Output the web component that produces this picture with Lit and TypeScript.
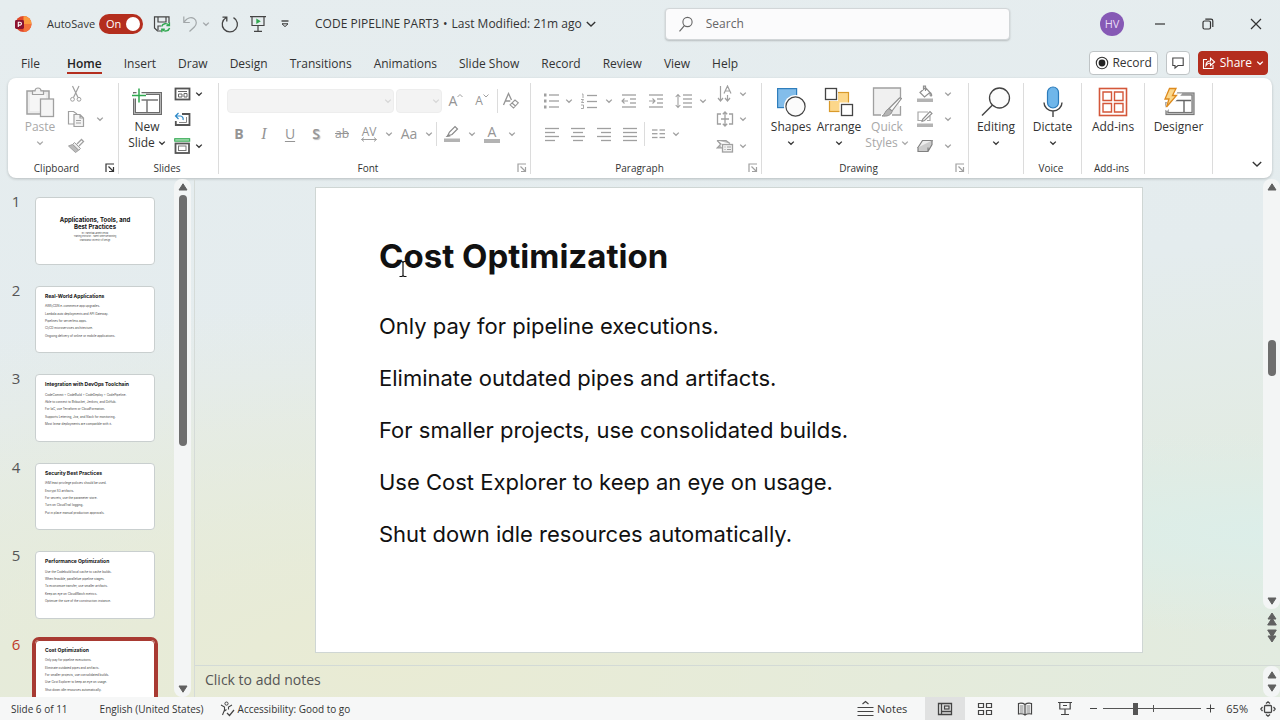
import { LitElement, html, css, svg } from "lit";
import { customElement } from "lit/decorators.js";
import { classMap } from "lit/directives/class-map.js";

const K = "#444";
const G = "#a0a0a0";

const icon = (w: number, h: number, body: unknown) => html`<svg width=${w} height=${h} viewBox="0 0 ${w} ${h}" fill="none" aria-hidden="true">${body}</svg>`;

const chev = (color = "#333", w = 8) => html`<svg width=${w} height=${w} viewBox="0 0 8 8" fill="none" aria-hidden="true"><path d="M1.2 2.6 L4 5.3 L6.8 2.6" stroke=${color} stroke-width=${w > 8 ? 0.9 : 1.3}/></svg>`;

const lines = (rows: number[][], color = G) => rows.map(([x1, x2, y]) => svg`<path d="M${x1} ${y}H${x2}" stroke=${color} stroke-width="1.3"/>`);

const I = {
  logo: icon(18, 18, svg`<circle cx="9.5" cy="9" r="8" fill="#e0492a"/><path d="M9.5 1a8 8 0 0 1 8 8h-8z" fill="#fb9a3e"/><path d="M17.5 9a8 8 0 0 1-8 8V9z" fill="#f4713a"/><rect x="1" y="5" width="9" height="9" rx="1.4" fill="#8c1230"/><path d="M4.300 12V7.200h1.700a1.400 1.400 0 0 1 0 2.900H4.300" stroke="#fff" stroke-width="1.100"/>`),
  save: icon(18, 18, svg`<path d="M8 16H4.5L1.5 13V1.8H16V8M5 2v5h8V2M5 15v-4h3" stroke="#444" stroke-width="1.2"/><path d="M8.6 11.4a4.2 4.2 0 0 1 7.2-1.2M16.4 7.6v3h-3M16.6 13a4.2 4.2 0 0 1-7.2 1.6M8.8 17.2v-3h3" stroke="#2fa84f" stroke-width="1.4"/>`),
  undo: icon(17, 18, svg`<path d="M1.8 1.5v6h6M2 7.2C5 3 9 1.6 12 3.6c3.200 2.200 2.800 6 .3 8.400L7.500 16.500" stroke="#a2a7a9" stroke-width="1.2"/>`),
  redo: icon(18, 18, svg`<path d="M5 2.700A7.600 7.600 0 1 0 12.500 2.600M5.800 6.500V2.200H1.500" stroke="#444" stroke-width="1.300"/>`),
  present: icon(16, 18, svg`<path d="M0 1.600h16M2 2v8.500h12V2M8 10.500V16M4 16.300h8" stroke="#444" stroke-width="1.200"/><path d="M6.300 3.600l4.500 2.700-4.500 2.700z" fill="#2fa84f"/>`),
  qat: icon(10, 10, svg`<path d="M1.500 2h7" stroke="#333" stroke-width="1.300"/><path d="M2 4.800L5 7.600 8 4.800z" stroke="#333"/>`),
  search: icon(16, 17, svg`<circle cx="9.500" cy="6" r="4.600" stroke="#666" stroke-width="1.100"/><path d="M6.400 9.600L1.500 15.300" stroke="#666" stroke-width="1.200"/>`),
  min: icon(12, 12, svg`<path d="M1 6h10" stroke="#333" stroke-width="1.200"/>`),
  restore: icon(12, 12, svg`<rect x="1" y="3" width="7.500" height="8" rx="1.500" stroke="#333" stroke-width="1.200"/><path d="M3.300 1.200H9a1.800 1.800 0 0 1 1.800 1.800v6" stroke="#333" stroke-width="1.200"/>`),
  close: icon(12, 12, svg`<path d="M1 1l10 10M11 1L1 11" stroke="#333" stroke-width="1.200"/>`),
  rec: icon(14, 14, svg`<circle cx="7" cy="7" r="5.700" stroke="#333" stroke-width="1.100"/><circle cx="7" cy="7" r="3.400" fill="#222"/>`),
  comment: icon(14, 14, svg`<path d="M1.800 2h10.400v7.500H7L4 12V9.500H1.800z" stroke="#444" stroke-width="1.100"/>`),
  share: icon(14, 14, svg`<path d="M5 3.500H1.500v9h9.500V9M4 9.500C4 6.500 6 5 8.500 5V2.200L12.600 6 8.500 9.500V7C6.500 7 5 7.800 4 9.500z" stroke="#fff" stroke-width="1.100"/>`),
  paste: icon(30, 32, svg`<rect x="2" y="5" width="22" height="23" fill="#ececec" stroke=${G} stroke-width="1.500"/><rect x="5" y="8" width="16" height="17" fill="#f6f6f6"/><path d="M7.500 8.500V5H10c0-4 6-4 6 0h2.500v3.500z" fill="#f3f3f3" stroke=${G} stroke-width="1.200"/><rect x="15.500" y="13" width="13" height="17.500" fill="#f5f5f5" stroke=${G} stroke-width="1.300"/>`),
  cut: icon(16, 18, svg`<path d="M4.500 1l5.500 11.500M11 1L5.500 12.500" stroke=${G} stroke-width="1.200"/><circle cx="4.500" cy="14.300" r="1.900" stroke=${G}/><circle cx="11" cy="14.300" r="1.900" stroke=${G}/>`),
  copy: icon(18, 18, svg`<path d="M7 14H1.500V1.500h5L10 4" stroke=${G} stroke-width="1.200"/><path d="M7 4.500h6l3.500 3.500v8.500H7zM13 4.500V8h3.500M9 10.500h5M9 13h5" fill="#f4f4f4" stroke=${G} stroke-width="1.200"/>`),
  brush: icon(18, 16, svg`<path d="M10 6l4.500-4.500 2 2L12 8" stroke=${G} stroke-width="1.300"/><path d="M7.500 4.500l6 6-1.800 1.800-6-6z" fill="#eee" stroke=${G}/><path d="M5.500 6.500L1.500 8l7 6.500 3-2.200z" fill="#bbb" stroke=${G}/>`),
  newSlide: icon(32, 28, svg`<rect x="3.500" y="5.500" width="26" height="20" fill="#fff" stroke="#6c6c6c" stroke-width="3"/><rect x="3.500" y="5.500" width="26" height="20" stroke="#b5b5b5"/><path d="M6 12h21M16 12v12" stroke="#777" stroke-width="1.500"/><path d="M0 8h15M8 0v15" stroke="#fff" stroke-width="5"/><path d="M1 7.500h14M8 .5v14" stroke="#2fa84f" stroke-width="1.500"/>`),
  layout: icon(17, 14, svg`<rect x="1.500" y="1.500" width="14" height="11" stroke="#555" stroke-width="1.800"/><path d="M4 4.500h9M4.500 7h3.500v3H4.500zM10 6.500h3V10h-3z" stroke="#666"/>`),
  reset: icon(17, 15, svg`<path d="M8 2h7.500v11H1.800V9" stroke="#555" stroke-width="1.800"/><path d="M12.500 5v5.500H5" stroke="#888"/><path d="M4.500 1L1.500 4l3 3M2 4h4.500a3 3 0 0 1 2.500 4" stroke="#2b88c8" stroke-width="1.200"/>`),
  section: icon(17, 16, svg`<rect x=".7" y=".7" width="15" height="2.500" fill="#a8dcb3" stroke="#2fa84f"/><rect x="1.500" y="5.500" width="13.500" height="9.500" stroke="#555" stroke-width="1.800"/><rect x="4.500" y="8" width="7.500" height="4.500" stroke="#777"/>`),
  launcher: (c: string) => icon(10, 10, svg`<path d="M1 9V1h8M3.500 3.500l4.500 4.500M8.500 4v4.500H4" stroke=${c} stroke-width="1.200"/>`),
  av: icon(18, 16, svg`<path d="M1.500 13.500h15M4 11.500l-2.500 2L4 15.500M14 11.500l2.500 2-2.500 2" stroke=${G}/>`),
  pen: icon(18, 18, svg`<path d="M4.500 11l2-4L12 1.500l2.500 2.500L9 9.500z" stroke="#8a8a8a" stroke-width="1.200"/><path d="M2.500 12l3.500-3 1.500 2.500z" fill="#8a8a8a"/><rect x="1" y="13.500" width="16" height="3.500" fill="#b3b3b3"/>`),
  clear: icon(18, 18, svg`<path d="M1.500 13L6.500 1.500 9.500 8M3.300 9h5" stroke="#959595" stroke-width="1.300"/><path d="M8 12.800L13 8l3.300 2.800-4.800 5.200zM10 11l3.500 3" fill="#fff" stroke="#959595" stroke-width="1.100"/>`),
  bullets: icon(18, 16, svg`<path d="M2 2h2.500M2 8h2.500M2 14h2.500" stroke=${G} stroke-width="3"/>${lines([[7, 17, 2], [7, 17, 8], [7, 17, 14]])}`),
  numbers: icon(18, 17, svg`<path d="M2 1h1v4M1 6.500h2.500l-2 3H4M1 12h2.500v3.500H1" stroke=${G} stroke-width=".9"/>${lines([[7, 17, 2.5], [7, 17, 8.5], [7, 17, 14.5]])}`),
  outdent: icon(16, 16, svg`${lines([[1, 15, 2], [9, 15, 6], [9, 15, 10], [1, 15, 14]])}<path d="M1 8h6M3.500 5.500L1 8l2.500 2.500" stroke=${G} stroke-width="1.100"/>`),
  indent: icon(16, 16, svg`${lines([[1, 15, 2], [9, 15, 6], [9, 15, 10], [1, 15, 14]])}<path d="M1 8h6M4.500 5.500L7 8l-2.500 2.500" stroke=${G} stroke-width="1.100"/>`),
  spacing: icon(17, 16, svg`${lines([[8, 17, 2], [8, 17, 6], [8, 17, 10], [8, 17, 14]])}<path d="M3 1.500v13M.7 4L3 1.500 5.300 4M.7 12L3 14.500 5.300 12" stroke=${G} stroke-width="1.100"/>`),
  left: icon(16, 15, lines([[1, 15, 1.5], [1, 11, 5.5], [1, 15, 9.5], [1, 11, 13.5]])),
  center: icon(16, 15, lines([[1, 15, 1.5], [3, 13, 5.5], [1, 15, 9.5], [3, 13, 13.5]])),
  right: icon(16, 15, lines([[1, 15, 1.5], [5, 15, 5.5], [1, 15, 9.5], [5, 15, 13.5]])),
  justify: icon(16, 15, lines([[1, 15, 1.5], [1, 15, 5.5], [1, 15, 9.5], [1, 15, 13.5]])),
  cols: icon(13, 10, lines([[0, 5.5, 1], [7.5, 13, 1], [0, 5.5, 4.7], [7.5, 13, 4.7], [0, 5.5, 8.500], [7.5, 13, 8.500]])),
  textDir: icon(17, 18, svg`<path d="M3.500 1v15M1 13l2.500 3L6 13M10.500 10v6M8 13l2.500 3 2.500-3M7 8.500L10.500 1 14 8.500M8.200 6h4.600" stroke=${G} stroke-width="1.200"/>`),
  alignText: icon(18, 16, svg`<path d="M5 3H1.500v10H5M13 3h3.500v10H13M5 8h8M9 1v14M6.800 3.200L9 1l2.200 2.200M6.800 12.800L9 15l2.200-2.200" stroke=${G} stroke-width="1.300"/>`),
  smart: icon(18, 14, svg`<path d="M1 1.500h9l4 3M1 1.500l4 3.500-4 4h5" fill="#bbb" stroke=${G} stroke-width="1.200"/><rect x="6.500" y="5.500" width="10" height="7.500" fill="#f2f2f2" stroke=${G} stroke-width="1.300"/><path d="M8.500 8h1M11 8h4M8.500 10.500h1M11 10.500h4" stroke=${G}/>`),
  shapes: icon(30, 30, svg`<rect x="1.600" y="1.600" width="19" height="19" fill="#83bdea" stroke="#2f7ebc" stroke-width="1.200"/><circle cx="19.500" cy="19.500" r="11.500" fill="#fff"/><circle cx="19.500" cy="19.500" r="9.600" fill="#fbfbfb" stroke="#444" stroke-width="1.200"/>`),
  arrange: icon(30, 30, svg`<rect x="5.500" y="5.500" width="19" height="19" fill="#fcd78a" stroke="#d99a2b" stroke-width="1.200"/><rect x="-1" y="-1" width="15" height="15" fill="#fff"/><rect x="1.500" y="1.500" width="11" height="11" fill="#fff" stroke="#444" stroke-width="1.300"/><rect x="15.500" y="15.500" width="15" height="15" fill="#fff"/><rect x="17.500" y="17.500" width="11" height="11" fill="#fff" stroke="#444" stroke-width="1.300"/>`),
  quick: icon(30, 32, svg`<path d="M9 29H1.500V2h27v10M28.500 20v9H20" fill="#f0f0f0" stroke=${G} stroke-width="1.300"/><rect x="3" y="3" width="24" height="25" fill="#f0f0f0"/><path d="M29.500 12.500L20 25l-3-2.500L27.500 12z" fill="#fafafa" stroke="#909090" stroke-width="1.200"/><path d="M17 22.500l3 3c-1 4-5 5-10 4.500 3-1 3-6 7-7.500z" fill="#b5b5b5" stroke="#909090"/>`),
  fill: icon(18, 18, svg`<path d="M4 7.500L9.500 2.500l4.500 5-5.500 4.500zM7.500 5V1.200h2V6M14.500 7.500c1.500 2 1.500 3.500.5 3.500s-1.200-1-.5-3.500" stroke="#909090" stroke-width="1.200"/><rect x="1" y="13.500" width="16" height="3.500" fill="#b3b3b3"/>`),
  outline: icon(18, 18, svg`<path d="M12 2H2v8.500h4M14 6v4.500h-3" stroke="#a8a8a8" stroke-width="1.200"/><path d="M6.500 9.500L14 1.500l2 2-7.500 7-2.500.8z" fill="#fff" stroke="#909090" stroke-width="1.100"/><rect x="1" y="13.500" width="16" height="3.500" fill="#b3b3b3"/>`),
  effects: icon(18, 14, svg`<path d="M2 8.500L6.500 1.500h9.500L12 8.500z" fill="#eee" stroke="#808080" stroke-width="1.200"/><path d="M2 8.500v4h10l4-7v-4M12 8.500v4" fill="#ccc" stroke="#808080" stroke-width="1.200"/>`),
  editing: icon(30, 30, svg`<circle cx="18.500" cy="11" r="10" fill="#fcfcfc" stroke="#444" stroke-width="1.300"/><path d="M11.500 18L1 28.500" stroke="#444" stroke-width="1.400"/>`),
  mic: icon(20, 32, svg`<rect x="4.500" y="1" width="11" height="21" rx="5.500" fill="#6fb6ea" stroke="#2b7bbb" stroke-width="1.200"/><path d="M1 16.500a9 8.500 0 0 0 18 0M10 25v6" stroke="#444" stroke-width="1.400"/>`),
  addins: icon(30, 30, svg`<rect x="1.500" y="1.500" width="27" height="27" stroke="#d4573a" stroke-width="1.600"/><path d="M5 5h8.500v8.500H5zM16.500 5H25v8.500h-8.500zM5 16.500h8.500V25H5zM16.500 16.500H25V25h-8.500z" stroke="#d4573a" stroke-width="1.400"/>`),
  designer: icon(32, 30, svg`<rect x="4" y="7" width="26" height="19.500" fill="#fff" stroke="#777" stroke-width="3.200"/><rect x="4" y="7" width="26" height="19.500" stroke="#bbb"/><path d="M7 13.500h21M21 13.500V25" stroke="#666" stroke-width="1.400"/><path d="M6 .5h9L11 8h5L3 23l3-9.500H1z" fill="#fff" stroke="#fff" stroke-width="3"/><path d="M6.500 1.500H13L9.500 8.500h4L3.500 20l2.500-8H2z" fill="#fcd78a" stroke="#dd8a1e" stroke-width="1.300"/>`),
  up: icon(10, 8, svg`<path d="M5 .8L9 7H1z" fill="#606060" stroke="#606060" stroke-linejoin="round"/>`),
  down: icon(10, 8, svg`<path d="M5 7.200L9 1H1z" fill="#606060" stroke="#606060" stroke-linejoin="round"/>`),
  up2: icon(10, 14, svg`<path d="M5 1L9 7H1zM5 6L9.300 13H.7z" fill="#606060" stroke="#606060" stroke-linejoin="round"/>`),
  down2: icon(10, 14, svg`<path d="M5 8L9.300 1H.7zM5 13L9 7H1z" fill="#606060" stroke="#606060" stroke-linejoin="round"/>`),
  access: icon(15, 16, svg`<circle cx="6.500" cy="2.600" r="1.600" stroke=${K}/><path d="M1 4l3.500 2v3L2.500 14M12 4L8.500 6v2.500M4.500 10l2-1.500" stroke=${K} stroke-width="1.100"/><path d="M7 12l2.500 2.500L14 9" stroke=${K} stroke-width="1.200"/>`),
  notes: icon(17, 17, svg`<path d="M5.500 4L8.500 1.500 11.500 4M.5 7.500h16M.5 11.500h16M.5 15.500h16" stroke=${K} stroke-width="1.200"/>`),
  normal: icon(16, 14, svg`<path d="M1.500 1.500h13v11h-13zM4.500 1.500v11M4.500 9.500h10" stroke=${K} stroke-width="1.300"/><rect x="7.500" y="4" width="4.500" height="3" stroke=${K} stroke-width="1.200"/>`),
  sorter: icon(16, 14, svg`<path d="M1.500 1.500h5v4h-5zM9.500 1.500h5v4h-5zM1.500 8.500h5v4h-5zM9.500 8.500h5v4h-5z" stroke=${K} stroke-width="1.200"/>`),
  reading: icon(16, 14, svg`<path d="M8 2.500C6 1 3.500 1 1.500 1.500v10.500C4 11.500 6 11.500 8 13c2-1.500 4-1.500 6.500-1V1.500C12.500 1 10 1 8 2.500zM8 2.500V13" stroke=${K} stroke-width="1.200"/><path d="M3 4h3.500M3 6h3.500M3 8h3.500M3 10h3.500M9.500 4H13M9.500 6H13M9.500 8H13M9.500 10H13" stroke="#777" stroke-width=".9"/>`),
  show: icon(14, 15, svg`<path d="M0 1.500h14M1.800 2v6h10.400V2M7 8v5.500M3 13.500h8M5 4.500h4" stroke=${K} stroke-width="1.200"/>`),
  fit: icon(16, 16, svg`<rect x="4.500" y="4.500" width="7" height="7" rx="1" stroke=${K} stroke-width="1.300"/><path d="M6 2.500L8 .8l2 1.700M6 13.500l2 1.700 2-1.700M2.500 6L.8 8l1.700 2M13.500 6l1.700 2-1.700 2" stroke=${K} stroke-width="1.200"/>`),
  beam: icon(8, 18, svg`<path d="M.5 1.500h2.500l1 1 1-1h2.500M4 2.500v13M.5 16.500h2.500l1-1 1 1h2.500" stroke="#111" stroke-width="1.200"/>`),
};

interface Slide { title: string; lines: string[]; cover?: boolean; }

const slides: Slide[] = [
  { title: "Applications, Tools, and Best Practices", cover: true, lines: ["BY: Harshitaa Jasmin Kelura", "Training Instructor - Talent Shine Networking", "Chandubha University of Design"] },
  { title: "Real-World Applications", lines: ["AWS/CDN e-commerce app upgrades.", "Lambda auto deployments and API Gateway.", "Pipelines for serverless apps.", "CI/CD microservices architecture.", "Ongoing delivery of online or mobile applications."] },
  { title: "Integration with DevOps Toolchain", lines: ["CodeCommit + CodeBuild + CodeDeploy + CodePipeline.", "Able to connect to Bitbucket, Jenkins, and GitHub.", "For IaC, use Terraform or CloudFormation.", "Supports Lettering, Jira, and Slack for monitoring.", "Most linear deployments are compatible with it."] },
  { title: "Security Best Practices", lines: ["IAM least privilege policies should be used.", "Encrypt S3 artifacts.", "For secrets, use the parameter store.", "Turn on CloudTrail logging.", "Put in place manual production approvals."] },
  { title: "Performance Optimization", lines: ["Use the Codebuild local cache to cache builds.", "When feasible, parallelize pipeline stages.", "To economize transfer, use smaller artifacts.", "Keep an eye on CloudWatch metrics.", "Optimize the size of the construction instance."] },
  { title: "Cost Optimization", lines: ["Only pay for pipeline executions.", "Eliminate outdated pipes and artifacts.", "For smaller projects, use consolidated builds.", "Use Cost Explorer to keep an eye on usage.", "Shut down idle resources automatically."] },
];

const tabs = ["File", "Home", "Insert", "Draw", "Design", "Transitions", "Animations", "Slide Show", "Record", "Review", "View", "Help"];

@customElement("app-root")
export class AppRoot extends LitElement {
  static styles = css`
    :host {
      display: flex; flex-direction: column; height: 100vh; overflow: hidden;
      font-family: "Open Sans", "Noto Sans", sans-serif; font-size: 12px; line-height: 16px; color: #333;
      background:
        radial-gradient(ellipse 40% 14% at 100% 74%, #dceee9, transparent),
        radial-gradient(ellipse 70% 50% at 30% 92%, #e9ebd4, transparent),
        linear-gradient(172deg, #e6edef 0%, #e4ecee 46%, #e2ebe2 72%, #e2ebdf 100%);
    }
    * { box-sizing: border-box; }
    svg { display: block; flex: none; }
    button, input, select, textarea { font: inherit; color: inherit; border: 0; background: none; padding: 0; margin: 0; }
    button { display: flex; align-items: center; justify-content: center; white-space: nowrap; }
    .grow { flex: 1; }

    .titlebar { display: flex; align-items: center; height: 48px; padding: 0 18px 0 14px; flex: none; }
    .autosave { display: flex; align-items: center; gap: 4px; margin-left: 15px; font-size: 11px; }
    .switch { display: flex; align-items: center; justify-content: space-between; width: 44px; height: 20px; border-radius: 10px; background: #b42e1e; color: #fff; padding: 0 3px 0 7px; position: relative; }
    .switch input { position: absolute; inset: 0; width: 100%; height: 100%; opacity: 0; }
    .knob { width: 14px; height: 14px; border-radius: 50%; background: #fff; }
    .qat { display: flex; align-items: center; gap: 11px; margin-left: 10px; }
    .qat button { min-width: 16px; }
    .qat .tight { gap: 3px; }
    .doc { margin-left: 22px; gap: 3px; }
    .dot { margin: 0 1px; }
    .search { display: flex; align-items: center; gap: 12px; flex: 0 1 345px; height: 32px; margin-left: 68px; padding: 0 12px; border: 1px solid #d2d6d8; border-radius: 4px; background: #fbfbfc; box-shadow: 0 1px 2px #0003; }
    .search input { flex: 1; min-width: 0; outline: none; }
    .search input::placeholder { color: #666; opacity: 1; }
    .avatar { width: 24px; height: 24px; border-radius: 50%; background: #8659b5; color: #e9dcf5; font-size: 11px; }
    .window { display: flex; gap: 36px; margin-left: 30px; }

    .tabs { display: flex; align-items: center; height: 30px; padding: 0 12px 0 21px; flex: none; }
    .tabs nav { display: flex; gap: 22px; margin-top: 4px; }
    .tabs nav button { height: 18px; border-bottom: 2px solid transparent; }
    .tabs nav .file { margin-right: 5px; }
    .tabs nav .on { font-weight: 600; border-color: #b42e1e; color: #222; }
    .actions { display: flex; gap: 8px; }
    .actions button { height: 24px; border: 1px solid #bfc4c6; border-radius: 4px; background: #fff; padding: 0 5px; gap: 3px; }
    .actions .share { background: #b42e1e; border-color: #b42e1e; color: #fff; padding: 0 3px; gap: 4px; }
    .actions .note { padding: 0 4px; }

    .ribbon { display: flex; height: 100px; margin: 0 8px; padding: 5px 0 4px; flex: none; background: #fff; border-radius: 8px; box-shadow: 0 1px 3px #0003; }
    .group { display: flex; flex-direction: column; border-right: 1px solid #dcdcdc; flex: none; }
    .body { display: flex; flex: 1 1 0; min-height: 0; }
    .foot { display: flex; align-items: center; height: 12px; font-size: 10px; line-height: 12px; padding-right: 3px; flex: none; }
    .foot span { flex: 1; text-align: center; }
    .clip { width: 111px; }
    .clip .body { padding-left: 8px; }
    .slides { width: 100px; }
    .slides .body { padding-left: 4px; }
    .font { width: 312px; }
    .para { width: 231px; }
    .draw { width: 207px; }
    .draw .body { padding-left: 5px; }
    .edit { width: 55px; }
    .voice { width: 58px; }
    .add { width: 63px; }
    .design { width: 68px; }
    .big { flex-direction: column; justify-content: flex-start; padding-top: 1px; width: 48px; }
    .big .line { display: flex; align-items: center; gap: 3px; height: 16px; flex: none; }
    .big .pic { display: flex; align-items: center; justify-content: center; height: 35px; flex: none; }
    .off { color: #a8a8a8; }
    .full { width: 100%; }
    .stack { display: grid; grid-template-rows: 22px 28px 26px; grid-auto-flow: column; align-content: start; }
    .s-clip { grid-template-columns: 24px 24px; }
    .s-slides { grid-template-columns: 22px 12px; }
    .s-text { grid-template-columns: 24px 12px; margin-left: 4px; }
    .s-draw { grid-template-columns: 24px 22px; margin-left: 2px; }
    .rows { display: flex; flex-direction: column; gap: 9px; padding: 6px 0 0 8px; color: #959595; }
    .row { display: flex; align-items: center; height: 24px; }
    .c12 { width: 12px; }
    .c24 { width: 24px; }
    .c26 { width: 26px; }
    .c28 { width: 28px; }
    .combo { appearance: none; height: 24px; border: 1px solid #e6e6e6; border-radius: 4px; background: #efefef; }
    .face { width: 167px; }
    .size { width: 46px; }
    .field { display: grid; align-items: center; margin-right: 2px; }
    .field > * { grid-area: 1 / 1; }
    .field svg { justify-self: end; margin-right: 2px; }
    .sep { width: 1px; height: 24px; background: #dcdcdc; margin: 0 1px; }
    .glyph { font-size: 14px; line-height: 16px; }
    .small { font-size: 12px; }
    .b { font-weight: 700; }
    .i { font-family: "Liberation Serif", serif; font-style: italic; font-size: 16px; }
    .u { text-decoration: underline; text-underline-offset: 2px; }
    .s { text-decoration: line-through; }
    .shadow { font-weight: 600; text-shadow: 1px 1px 1px #bbb; }
    .over { display: grid; justify-items: center; align-items: center; }
    .over > * { grid-area: 1 / 1; }
    .over .top { align-self: start; line-height: 12px; }
    .bar { border-bottom: 4px solid #b3b3b3; line-height: 14px; width: 16px; text-align: center; }
    .sup { align-self: flex-start; }
    .collapse { align-self: flex-end; margin: 0 9px 4px 0; }

    .main { display: flex; flex: 1; min-height: 0; padding-top: 1px; }
    .panel { width: 174px; overflow: hidden; padding: 18px 0 0 11px; display: flex; flex-direction: column; gap: 21px; }
    .item { display: flex; gap: 14px; width: 100%; align-items: flex-start; justify-content: flex-start; flex: none; }
    .num { width: 10px; font-size: 15px; line-height: 20px; margin-top: -6px; color: #555; }
    .thumb { width: 120px; aspect-ratio: 16 / 9; border: 1px solid #c9cfcf; border-radius: 4px; background: #fff; padding: 6px 9px; text-align: left; font-family: Inter, sans-serif; color: #111; display: flex; flex-direction: column; white-space: nowrap; }
    .thumb b { font-size: 5px; line-height: 7px; }
    .thumb ul { list-style: none; margin: 3px 0 0; padding: 0; display: grid; grid-auto-rows: 1fr; height: 37px; align-items: center; font-size: 3px; line-height: 4px; color: #444; }
    .thumb.cover { white-space: normal; text-align: center; padding: 18px 20px; }
    .thumb.cover b { font-size: 6px; }
    .thumb.cover ul { height: 10px; margin-top: 2px; font-size: 2px; line-height: 3px; }
    .current .num { color: #c0392b; }
    .current .thumb { outline: 3px solid #a83a32; outline-offset: 0; border-color: #a83a32; }

    .scroll { display: flex; flex-direction: column; align-items: center; width: 17px; background: #f3f5f5; border-radius: 8px; padding: 4px 0; gap: 4px; flex: none; }
    .thumbbar { width: 8px; height: 251px; border-radius: 4px; background: #6e6e6e; }
    .work { display: flex; flex-direction: column; flex: 1; min-width: 0; margin-left: 3px; border-left: 1px solid #d5dbd8; }
    .stage { display: flex; flex: 1; min-height: 0; }
    .canvas { flex: 1; display: flex; align-items: flex-start; padding: 8px 120px 0; position: relative; }
    .slide { flex: 1; min-width: 0; aspect-ratio: 16 / 9; background: #fff; border: 1px solid #cfd6d4; padding: 45px 63px 44px; font-family: Inter, sans-serif; color: #111; }
    .slide h1 { margin: 0; font-size: 33px; line-height: 46px; font-weight: 700; }
    .slide ul { margin: 21px 0 0; padding: 0; list-style: none; font-size: 22px; line-height: 52px; }
    .slide li { white-space: nowrap; }
    .beam { position: absolute; left: 204px; top: 81px; }
    .rail { display: flex; flex-direction: column; align-items: center; gap: 3px; padding-bottom: 22px; flex: none; }
    .vscroll { flex: 1; }
    .vscroll .grow { display: flex; align-items: center; justify-content: center; }
    .grip { width: 8px; height: 36px; border-radius: 4px; background: #6e6e6e; margin-bottom: 72px; }
    .notes { display: flex; height: 32px; border-top: 1px solid #d3dad6; flex: none; }
    .notes textarea { flex: 1; resize: none; outline: none; padding: 5px 10px; font-size: 14px; line-height: 18px; }
    .notes textarea::placeholder { color: #555; opacity: 1; }
    .notes .scroll { padding: 5px 0; justify-content: space-between; }

    .status { display: flex; align-items: center; height: 23px; flex: none; background: #f6f7f7; padding: 0 4px 0 11px; font-size: 11px; }
    .info { display: flex; align-items: center; font-size: 10px; }
    .status button { gap: 3px; height: 23px; }
    .status .lang { margin: 0 16px 0 32px; }
    .views { display: flex; margin: 0 4px 0 18px; }
    .views button { width: 40px; }
    .views .on { background: #e0e1e1; }
    .zoom { display: flex; align-items: center; gap: 5px; }
    .zoom input { appearance: none; width: 98px; height: 16px; background: linear-gradient(#555, #555) 50px 50% / 1px 7px no-repeat, linear-gradient(#555, #555) 0 50% / 100% 1px no-repeat; }
    .zoom input::-webkit-slider-thumb { appearance: none; width: 5px; height: 12px; background: #555; }
    .pct { margin: 0 12px 0 11px; }
  `;

  private btn(label: string, content: unknown, cls = "") {
    return html`<button class=${cls} aria-label=${label}>${content}</button>`;
  }

  private big(label: string[], pic: unknown, o: { off?: boolean; cls?: string; arrow?: "inline" | "below" } = {}) {
    const c = o.off ? "#a8a8a8" : "#333";
    return html`<button class="big ${o.off ? "off" : ""} ${o.cls ?? ""}">
      <span class="pic">${pic}</span>
      ${label.map((l, i) => html`<span class="line">${l}${o.arrow === "inline" && i === label.length - 1 ? chev(c) : ""}</span>`)}
      ${o.arrow === "below" ? html`<span class="line">${chev(c)}</span>` : ""}
    </button>`;
  }

  private foot(label: string, launch = "") {
    return html`<div class="foot"><span>${label}</span>${launch ? this.btn(`${label} options`, I.launcher(launch)) : ""}</div>`;
  }

  private renderTitle() {
    return html`<header class="titlebar">
      ${I.logo}
      <label class="autosave">AutoSave
        <span class="switch">On<input type="checkbox" checked aria-label="AutoSave" /><span class="knob"></span></span>
      </label>
      <div class="qat">
        ${this.btn("Save", I.save)}
        ${this.btn("Undo", html`${I.undo}${chev("#a2a7a9")}`, "tight")}
        ${this.btn("Redo", I.redo)}
        ${this.btn("Present", I.present)}
        ${this.btn("Customize toolbar", I.qat)}
      </div>
      <button class="doc"><span>CODE PIPELINE PART3</span><span class="dot">•</span><span>Last Modified: 21m ago</span>${chev("#333", 12)}</button>
      <label class="search">${I.search}<input type="search" placeholder="Search" aria-label="Search" /></label>
      <span class="grow"></span>
      <button class="avatar">HV</button>
      <div class="window">${this.btn("Minimize", I.min)}${this.btn("Restore", I.restore)}${this.btn("Close", I.close)}</div>
    </header>`;
  }

  private renderTabs() {
    return html`<div class="tabs">
      <nav>${tabs.map((t) => html`<button class=${classMap({ on: t === "Home", file: t === "File" })}>${t}</button>`)}</nav>
      <span class="grow"></span>
      <div class="actions">
        <button>${I.rec}Record</button>
        ${this.btn("Comments", I.comment, "note")}
        <button class="share">${I.share}Share ${chev("#fff")}</button>
      </div>
    </div>`;
  }

  private renderRibbon() {
    const g = chev(G);
    return html`<section class="ribbon">
      <div class="group clip">
        <div class="body">
          ${this.big(["Paste"], I.paste, { off: true, arrow: "below" })}
          <div class="stack s-clip">
            ${this.btn("Cut", I.cut)}${this.btn("Copy", I.copy)}${this.btn("Format painter", I.brush)}
            <span></span>${this.btn("Copy options", g)}
          </div>
        </div>
        ${this.foot("Clipboard", "#333")}
      </div>
      <div class="group slides">
        <div class="body">
          ${this.big(["New", "Slide"], I.newSlide, { arrow: "inline" })}
          <div class="stack s-slides">
            ${this.btn("Layout", I.layout)}${this.btn("Reset", I.reset)}${this.btn("Section", I.section)}
            ${this.btn("Layout options", chev())}<span></span>${this.btn("Section options", chev())}
          </div>
        </div>
        ${this.foot("Slides")}
      </div>
      <div class="group font">
        <div class="body"><div class="rows">
          <div class="row">
            <span class="field"><select class="combo face" disabled aria-label="Font"></select>${g}</span>
            <span class="field"><select class="combo size" disabled aria-label="Font size"></select>${g}</span>
            ${this.btn("Increase font size", html`<span class="glyph">A</span><span class="sup">${icon(6, 6, svg`<path d="M.5 4L3 1.500 5.500 4" stroke=${G}/>`)}</span>`, "c24")}
            ${this.btn("Decrease font size", html`<span class="small">A</span><span class="sup">${icon(6, 6, svg`<path d="M.5 1.500L3 4 5.500 1.500" stroke=${G}/>`)}</span>`, "c28")}
            <span class="sep"></span>
            ${this.btn("Clear formatting", I.clear, "c24")}
          </div>
          <div class="row">
            ${this.btn("Bold", html`<span class="glyph b">B</span>`, "c24")}
            ${this.btn("Italic", html`<span class="i">I</span>`, "c26")}
            ${this.btn("Underline", html`<span class="glyph u">U</span>`, "c26")}
            ${this.btn("Shadow", html`<span class="glyph shadow">S</span>`, "c26")}
            ${this.btn("Strikethrough", html`<span class="small s">ab</span>`, "c26")}
            ${this.btn("Character spacing", html`<span class="over"><span class="small top">AV</span>${I.av}</span>`, "c28")}
            ${this.btn("Spacing options", g, "c12")}
            ${this.btn("Change case", html`<span class="glyph">Aa</span>`, "c28")}
            ${this.btn("Case options", g, "c12")}
            <span class="sep"></span>
            ${this.btn("Highlight", I.pen, "c28")}
            ${this.btn("Highlight options", g, "c12")}
            ${this.btn("Font color", html`<span class="glyph bar">A</span>`, "c28")}
            ${this.btn("Color options", g, "c12")}
          </div>
        </div></div>
        ${this.foot("Font", G)}
      </div>
      <div class="group para">
        <div class="body">
          <div class="rows">
            <div class="row">
              ${this.btn("Bullets", I.bullets, "c24")}${this.btn("Bullet options", g, "c12")}
              ${this.btn("Numbering", I.numbers, "c28")}${this.btn("Numbering options", g, "c12")}
              ${this.btn("Decrease indent", I.outdent, "c28")}
              ${this.btn("Increase indent", I.indent, "c26")}
              ${this.btn("Line spacing", I.spacing, "c28")}${this.btn("Spacing options", g, "c12")}
            </div>
            <div class="row">
              ${this.btn("Align left", I.left, "c26")}${this.btn("Center", I.center, "c26")}
              ${this.btn("Align right", I.right, "c26")}${this.btn("Justify", I.justify, "c26")}
              <span class="sep"></span>
              ${this.btn("Columns", I.cols, "c24")}${this.btn("Column options", g, "c12")}
            </div>
          </div>
          <div class="stack s-text">
            ${this.btn("Text direction", I.textDir)}${this.btn("Align text", I.alignText)}${this.btn("SmartArt", I.smart)}
            ${this.btn("Direction options", g)}${this.btn("Align options", g)}${this.btn("SmartArt options", g)}
          </div>
        </div>
        ${this.foot("Paragraph", G)}
      </div>
      <div class="group draw">
        <div class="body">
          ${this.big(["Shapes"], I.shapes, { arrow: "below" })}
          ${this.big(["Arrange"], I.arrange, { arrow: "below" })}
          ${this.big(["Quick", "Styles"], I.quick, { off: true, arrow: "inline" })}
          <div class="stack s-draw">
            ${this.btn("Shape fill", I.fill)}${this.btn("Shape outline", I.outline)}${this.btn("Shape effects", I.effects)}
            ${this.btn("Fill options", g)}${this.btn("Outline options", g)}${this.btn("Effects options", g)}
          </div>
        </div>
        ${this.foot("Drawing", G)}
      </div>
      <div class="group edit">
        <div class="body">${this.big(["Editing"], I.editing, { arrow: "below", cls: "full" })}</div>
      </div>
      <div class="group voice">
        <div class="body">${this.big(["Dictate"], I.mic, { arrow: "below", cls: "full" })}</div>
        ${this.foot("Voice")}
      </div>
      <div class="group add">
        <div class="body">${this.big(["Add-ins"], I.addins, { cls: "full" })}</div>
        ${this.foot("Add-ins")}
      </div>
      <div class="group design">
        <div class="body">${this.big(["Designer"], I.designer, { cls: "full" })}</div>
      </div>
      <span class="grow"></span>
      ${this.btn("Collapse ribbon", chev("#333", 12), "collapse")}
    </section>`;
  }

  private renderThumb(s: Slide, i: number) {
    return html`<button class=${classMap({ item: true, current: i === 5 })}>
      <span class="num">${i + 1}</span>
      <div class=${classMap({ thumb: true, cover: !!s.cover })}>
        <b>${s.title}</b>
        <ul>${s.lines.map((l) => html`<li>${l}</li>`)}</ul>
      </div>
    </button>`;
  }

  render() {
    const current = slides[5];
    return html`
      ${this.renderTitle()}
      ${this.renderTabs()}
      ${this.renderRibbon()}
      <main class="main">
        <aside class="panel">${slides.map((s, i) => this.renderThumb(s, i))}</aside>
        <div class="scroll">${I.up}<span class="thumbbar"></span><span class="grow"></span>${I.down}</div>
        <div class="work">
          <div class="stage">
            <div class="canvas">
              <article class="slide">
                <h1>${current.title}</h1>
                <ul>${current.lines.map((l) => html`<li>${l}</li>`)}</ul>
              </article>
              <span class="beam">${I.beam}</span>
            </div>
            <div class="rail">
              <div class="scroll vscroll">${I.up}<span class="grow"><span class="grip"></span></span>${I.down}</div>
              ${I.up2}${I.down2}
            </div>
          </div>
          <div class="notes">
            <textarea placeholder="Click to add notes" aria-label="Notes" rows="1"></textarea>
            <div class="scroll">${I.up}${I.down}</div>
          </div>
        </div>
      </main>
      <footer class="status">
        <div class="info">
          <span>Slide 6 of 11</span>
          <button class="lang">English (United States)</button>
          <button>${I.access}Accessibility: Good to go</button>
        </div>
        <span class="grow"></span>
        <button>${I.notes}Notes</button>
        <div class="views">
          ${this.btn("Normal", I.normal, "on")}${this.btn("Slide sorter", I.sorter)}${this.btn("Reading view", I.reading)}${this.btn("Slide show", I.show)}
        </div>
        <div class="zoom">
          ${this.btn("Zoom out", icon(9, 9, svg`<path d="M1 4.500h7" stroke="#444"/>`))}
          <input type="range" min="10" max="180" value="65" aria-label="Zoom" />
          ${this.btn("Zoom in", icon(9, 9, svg`<path d="M.5 4.500h8M4.500 .5v8" stroke="#444"/>`))}
        </div>
        <span class="pct">65%</span>
        ${this.btn("Fit to window", I.fit)}
      </footer>`;
  }
}
